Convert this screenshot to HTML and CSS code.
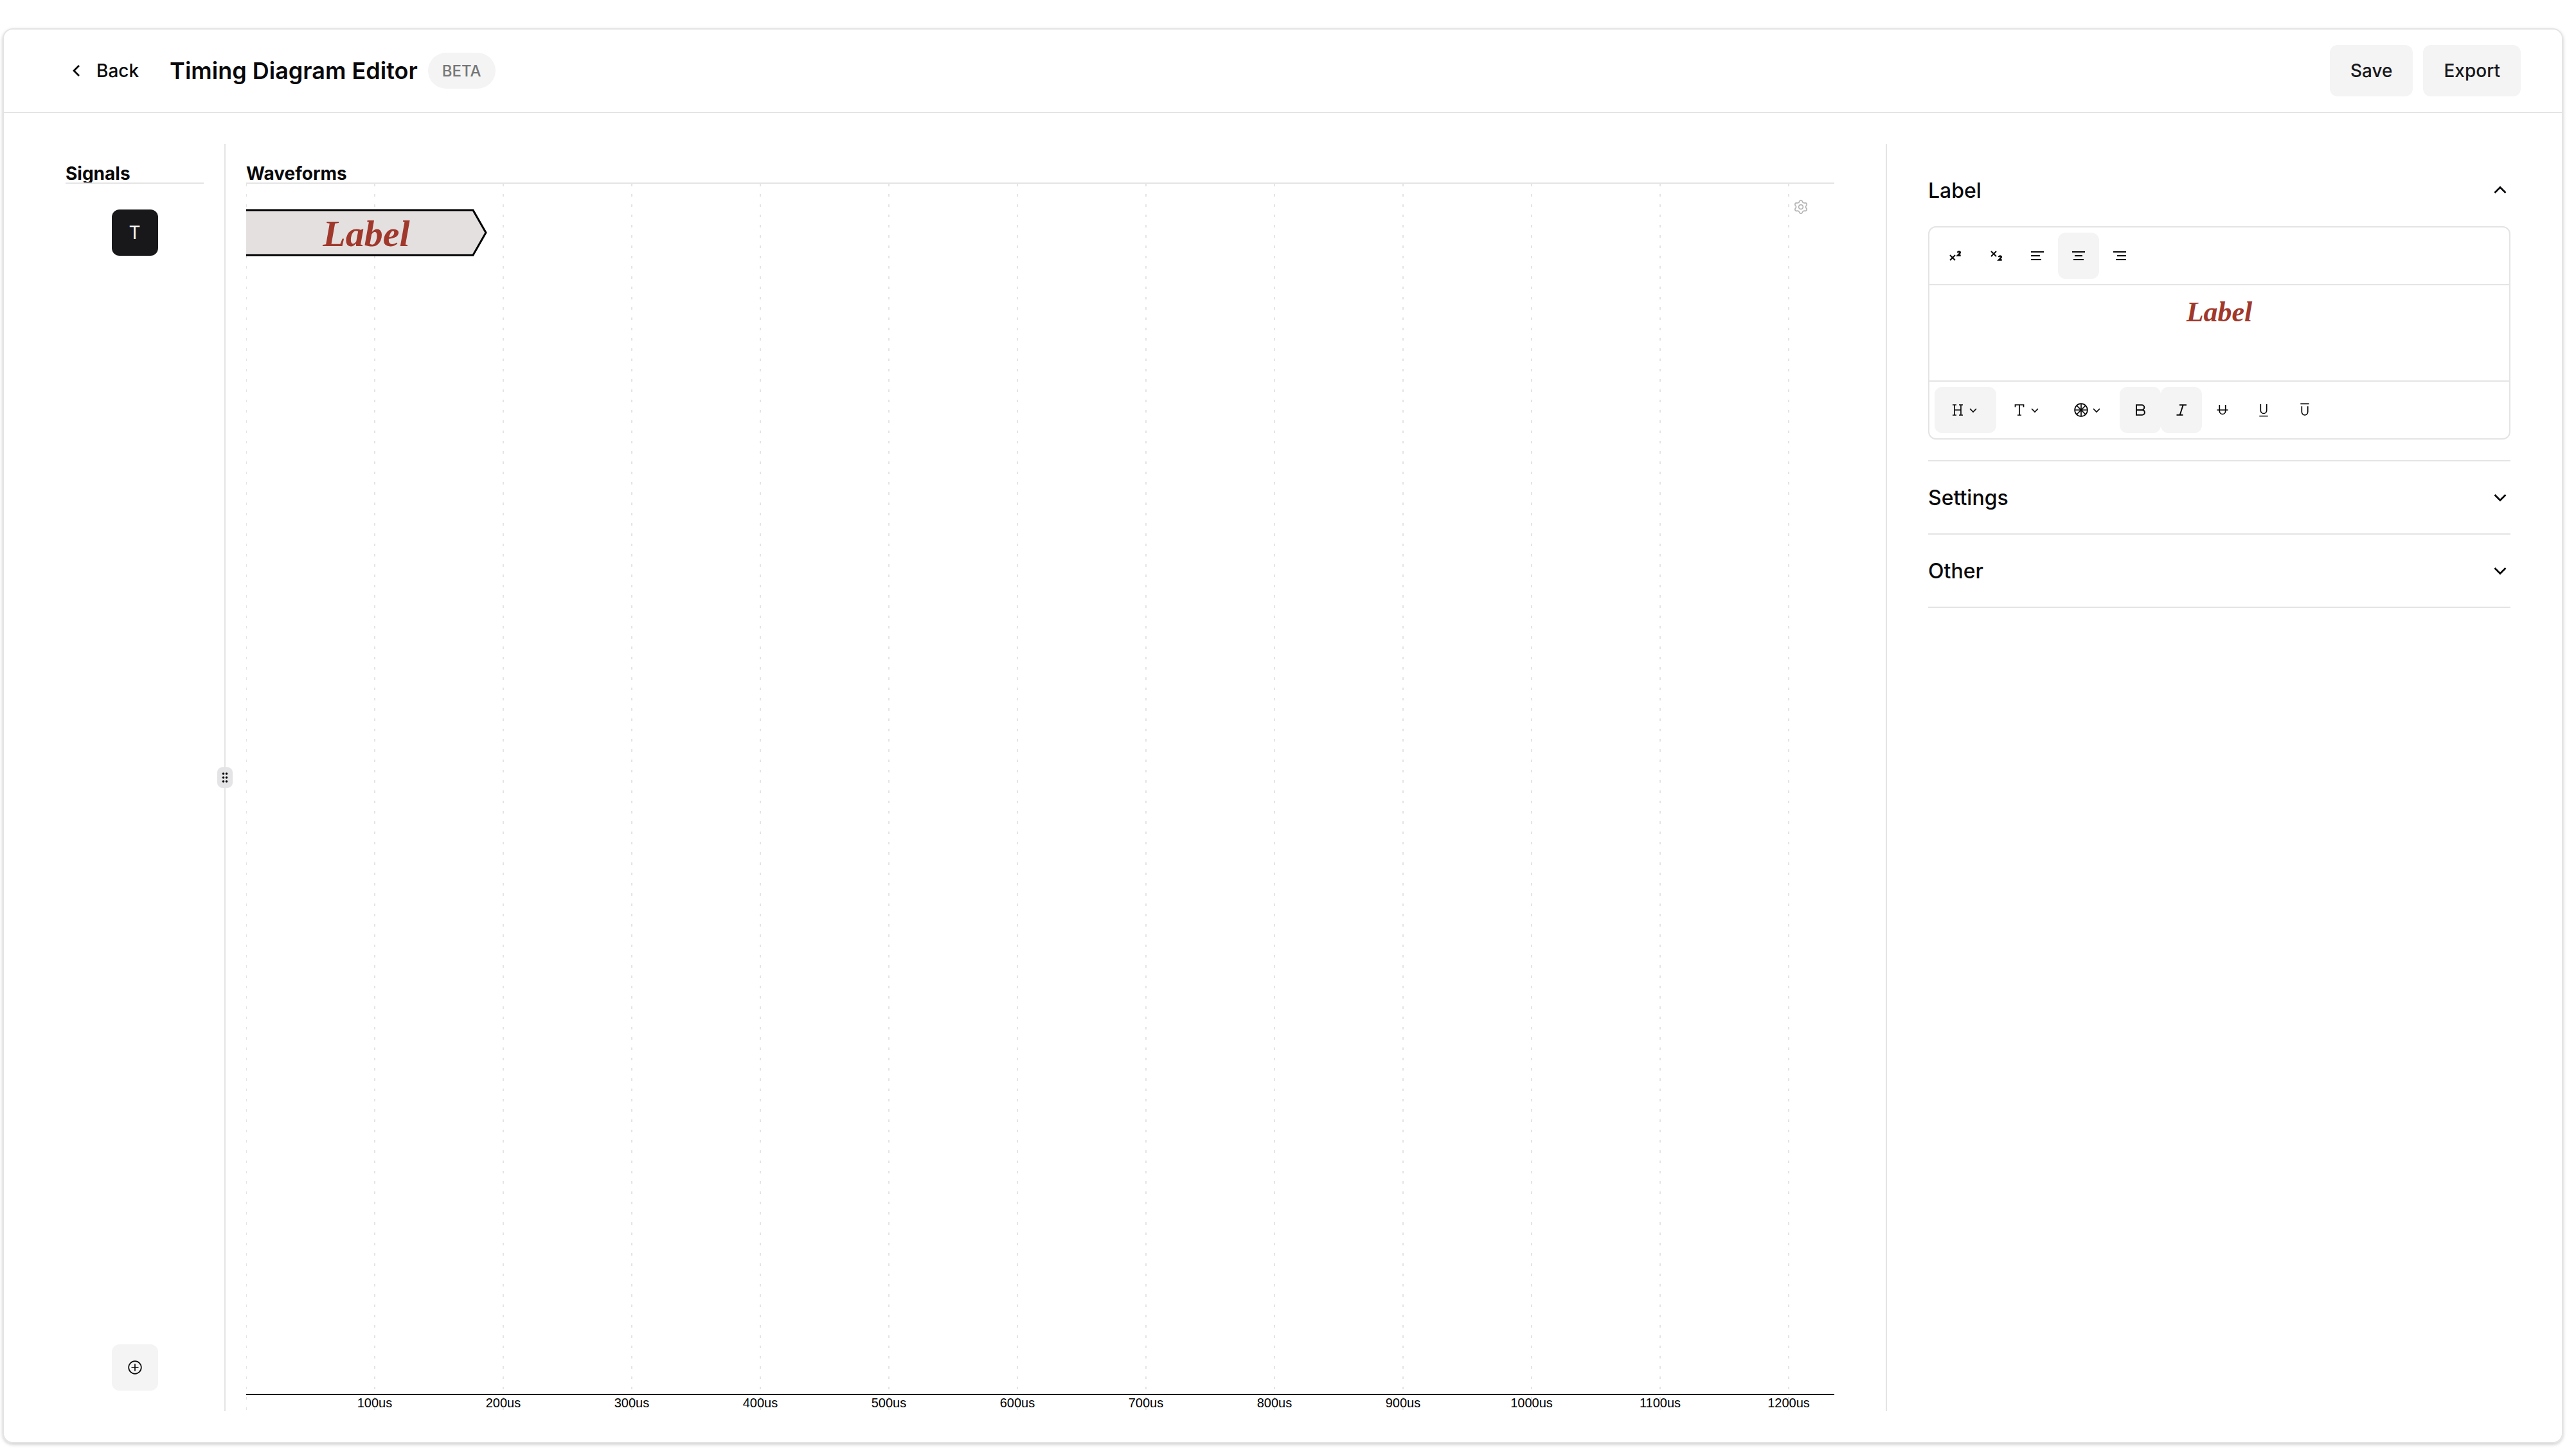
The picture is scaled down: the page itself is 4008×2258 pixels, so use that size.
FILE: index.html
```html
<!DOCTYPE html>
<html lang="en">
<head>
  <meta charset="utf-8">
  <title>Timing Diagram Editor</title>
  <link rel="stylesheet" href="styles.css">
</head>
<body>
  <main class="card">
    <header class="header">
      <button type="button" class="btn btn-back">
        <svg class="icon icon-bold" width="32" height="32" viewBox="0 0 32 32"><path d="M21 8l-8 8 8 8"/></svg>
        Back
      </button>
      <h1 class="title">Timing Diagram Editor</h1>
      <span class="badge">BETA</span>
      <div class="actions">
        <button type="button" class="btn btn-secondary">Save</button>
        <button type="button" class="btn btn-secondary">Export</button>
      </div>
    </header>

    <div class="editor">
      <section class="signals">
        <h2 class="column-title">Signals</h2>
        <div class="signal-list">
          <button type="button" class="btn-square btn-dark">T</button>
          <button type="button" class="btn-square" aria-label="Add signal">
            <svg class="icon icon-thin" width="32" height="32" viewBox="0 0 32 32"><circle cx="16" cy="16" r="9.8"/><path d="M16 10.5v11M10.5 16h11"/></svg>
          </button>
        </div>
      </section>

      <div class="divider">
        <div class="handle">
          <svg width="24" height="32" viewBox="0 0 24 32">
            <circle cx="9.5" cy="10" r="1.8"/><circle cx="14.5" cy="10" r="1.8"/>
            <circle cx="9.5" cy="16" r="1.8"/><circle cx="14.5" cy="16" r="1.8"/>
            <circle cx="9.5" cy="22" r="1.8"/><circle cx="14.5" cy="22" r="1.8"/>
          </svg>
        </div>
      </div>

      <section class="waveforms">
        <h2 class="column-title">Waveforms</h2>
        <div class="plot">
          <svg class="plot-svg">
            <!-- time grid -->
            <g class="grid">
              <line x1="0" x2="0" y2="100%"/>
              <line x1="200" x2="200" y2="100%"/>
              <line x1="400" x2="400" y2="100%"/>
              <line x1="600" x2="600" y2="100%"/>
              <line x1="800" x2="800" y2="100%"/>
              <line x1="1000" x2="1000" y2="100%"/>
              <line x1="1200" x2="1200" y2="100%"/>
              <line x1="1400" x2="1400" y2="100%"/>
              <line x1="1600" x2="1600" y2="100%"/>
              <line x1="1800" x2="1800" y2="100%"/>
              <line x1="2000" x2="2000" y2="100%"/>
              <line x1="2200" x2="2200" y2="100%"/>
              <line x1="2400" x2="2400" y2="100%"/>
            </g>
            <!-- text signal -->
            <path class="wave" d="M-4 41H353L373 76L353 111H-4Z"/>
            <text class="wave-label" x="187" y="97">Label</text>
            <!-- time axis, anchored to the bottom edge -->
            <svg class="axis" y="100%">
              <line x1="0" x2="100%" y1="-26" y2="-26"/>
              <text x="200" y="-6">100us</text>
              <text x="400" y="-6">200us</text>
              <text x="600" y="-6">300us</text>
              <text x="800" y="-6">400us</text>
              <text x="1000" y="-6">500us</text>
              <text x="1200" y="-6">600us</text>
              <text x="1400" y="-6">700us</text>
              <text x="1600" y="-6">800us</text>
              <text x="1800" y="-6">900us</text>
              <text x="2000" y="-6">1000us</text>
              <text x="2200" y="-6">1100us</text>
              <text x="2400" y="-6">1200us</text>
            </svg>
          </svg>
          <button type="button" class="gear" aria-label="Diagram settings">
            <svg class="icon icon-thin" width="24" height="24" viewBox="-12 -12 24 24">
              <path d="M-2.1-9.06Q0-11.5 2.1-9.06Q3-5.2 6.8-6.34Q9.96-5.75 8.89-2.72Q6 0 8.89 2.72Q9.96 5.75 6.8 6.34Q3 5.2 2.1 9.06Q0 11.5-2.1 9.06Q-3 5.2-6.8 6.34Q-9.96 5.75-8.89 2.72Q-6 0-8.89-2.72Q-9.96-5.75-6.8-6.34Q-3-5.2-2.1-9.06Z"/>
              <circle r="3.4"/>
            </svg>
          </button>
        </div>
      </section>

      <aside class="panel">
        <section class="accordion-item">
          <button type="button" class="accordion-trigger">
            Label
            <svg class="icon icon-bold" width="32" height="32" viewBox="0 0 32 32"><path d="M7.5 20l8.5-8.5 8.5 8.5"/></svg>
          </button>
          <div class="accordion-content">
            <div class="rich-text">
              <div class="toolbar">
                <button type="button" class="tool" aria-label="Superscript">
                  <svg class="icon" width="32" height="32" viewBox="0 0 32 32"><path d="M8 15l8 8M16 15l-8 8"/><path class="digit" d="M20 11.3q.3-1.8 2-1.8 1.7 0 1.7 1.5 0 1-3.5 4.500h4.500"/></svg>
                </button>
                <button type="button" class="tool" aria-label="Subscript">
                  <svg class="icon" width="32" height="32" viewBox="0 0 32 32"><path d="M8 9l8 8M16 9l-8 8"/><path class="digit" d="M20 18.3q.3-1.800 2-1.800 1.700 0 1.700 1.500 0 1-3.500 4.500h4.500"/></svg>
                </button>
                <button type="button" class="tool" aria-label="Align left">
                  <svg class="icon" width="32" height="32" viewBox="0 0 32 32"><path d="M6 10h20M6 16h14M6 22h16"/></svg>
                </button>
                <button type="button" class="tool active" aria-label="Align center">
                  <svg class="icon" width="32" height="32" viewBox="0 0 32 32"><path d="M6 10h20M10 16h12M8 22h16"/></svg>
                </button>
                <button type="button" class="tool" aria-label="Align right">
                  <svg class="icon" width="32" height="32" viewBox="0 0 32 32"><path d="M6 10h20M12 16h14M10 22h16"/></svg>
                </button>
              </div>
              <textarea class="rich-text-input" aria-label="Label text">Label</textarea>
              <div class="toolbar">
                <button type="button" class="tool tool-menu active" aria-label="Heading">
                  <svg class="icon icon-thin" width="24" height="24" viewBox="0 0 24 24"><path d="M7 4v16M17 4v16M7 12h10M4 4h6M14 4h6M4 20h6M14 20h6"/></svg>
                  <svg class="icon icon-thin" width="24" height="24" viewBox="0 0 24 24"><path d="M7 10l5 5 5-5"/></svg>
                </button>
                <button type="button" class="tool tool-menu" aria-label="Font">
                  <svg class="icon icon-thin" width="24" height="24" viewBox="0 0 24 24"><path d="M5.5 7.5V4h13v3.5M12 4v16M9 20h6"/></svg>
                  <svg class="icon icon-thin" width="24" height="24" viewBox="0 0 24 24"><path d="M7 10l5 5 5-5"/></svg>
                </button>
                <button type="button" class="tool tool-menu" aria-label="Color">
                  <svg class="icon icon-thin" width="24" height="24" viewBox="0 0 24 24"><circle cx="12" cy="12" r="9.9"/><path d="M12 2v20M2 12h20M5 5l14 14M19 5L5 19"/><circle cx="12" cy="12" r="1.5"/></svg>
                  <svg class="icon icon-thin" width="24" height="24" viewBox="0 0 24 24"><path d="M7 10l5 5 5-5"/></svg>
                </button>
                <button type="button" class="tool active" aria-label="Bold">
                  <svg class="icon" width="32" height="32" viewBox="0 0 32 32"><path d="M10 8.3h8.5a3.8 3.8 0 0 1 0 7.6H10zM10 15.9h9a3.9 3.9 0 0 1 0 7.8h-9z"/></svg>
                </button>
                <button type="button" class="tool active" aria-label="Italic">
                  <svg class="icon" width="32" height="32" viewBox="0 0 32 32"><path d="M13 8.3h11M8.5 23.7h10M18.7 8.3l-5 15.4"/></svg>
                </button>
                <button type="button" class="tool" aria-label="Strikethrough">
                  <svg class="icon icon-thin" width="32" height="32" viewBox="0 0 32 32"><path d="M11.3 8v9.5a4.7 5 0 0 0 9.4 0V8M7.5 16h17"/></svg>
                </button>
                <button type="button" class="tool" aria-label="Underline">
                  <svg class="icon icon-thin" width="32" height="32" viewBox="0 0 32 32"><path d="M11.3 7v9.5a4.7 5 0 0 0 9.4 0V7M9.3 25.5h13.4"/></svg>
                </button>
                <button type="button" class="tool" aria-label="Overline">
                  <svg class="icon icon-thin" width="32" height="32" viewBox="0 0 32 32"><path d="M11.3 10.3v8.5a4.7 5 0 0 0 9.4 0v-8.5M9.3 6.4h13.4"/></svg>
                </button>
              </div>
            </div>
          </div>
        </section>
        <section class="accordion-item">
          <button type="button" class="accordion-trigger">
            Settings
            <svg class="icon icon-bold" width="32" height="32" viewBox="0 0 32 32"><path d="M7.5 12l8.5 8.5 8.5-8.5"/></svg>
          </button>
        </section>
        <section class="accordion-item">
          <button type="button" class="accordion-trigger">
            Other
            <svg class="icon icon-bold" width="32" height="32" viewBox="0 0 32 32"><path d="M7.5 12l8.5 8.5 8.5-8.5"/></svg>
          </button>
        </section>
      </aside>
    </div>
  </main>
</body>
</html>
```

FILE: styles.css
```css
* {
  box-sizing: border-box;
}

body {
  margin: 0;
  height: 100vh;
  padding: 44px 20px 12px 4px;
  font-family: Inter, "Liberation Sans", sans-serif;
  font-size: 28px;
  color: #09090b;
  background: #fff;
}

button {
  border: 0;
  background: none;
  font: inherit;
  color: inherit;
  cursor: pointer;
}

h1,
h2 {
  margin: 0;
}

.card {
  display: flex;
  flex-direction: column;
  height: 100%;
  border: 2px solid #e4e4e4;
  border-radius: 16px;
  box-shadow: 0 2px 6px rgba(0, 0, 0, 0.1), 0 2px 4px rgba(0, 0, 0, 0.1);
}

.icon {
  flex: none;
  fill: none;
  stroke: currentColor;
  stroke-width: 2;
}

.icon-thin {
  stroke-width: 1.7;
}

.icon-bold {
  stroke-width: 2.8;
}

.digit {
  stroke-width: 2.6;
}

/* Header */

.header {
  display: flex;
  align-items: center;
  gap: 16px;
  height: 130px;
  padding: 0 64px;
  border-bottom: 2px solid #e4e4e4;
}

.btn {
  display: flex;
  align-items: center;
  gap: 16px;
  height: 80px;
  padding: 0 32px;
  border-radius: 12px;
  font-weight: 500;
}

.btn-secondary {
  background: #f4f4f4;
  color: #18181b;
}

.title {
  font-size: 36px;
  font-weight: 600;
}

.badge {
  display: flex;
  align-items: center;
  height: 56px;
  padding: 0 22px;
  border-radius: 28px;
  background: #f4f4f4;
  color: #777;
  font-size: 24px;
  font-weight: 500;
}

.actions {
  display: flex;
  gap: 16px;
  margin-left: auto;
}

/* Editor columns */

.editor {
  display: flex;
  flex: 1;
  min-height: 0;
  padding: 48px 80px 48px 96px;
}

.column-title {
  display: flex;
  flex: none;
  align-items: flex-end;
  height: 62px;
  border-bottom: 2px solid #e4e4e4;
  font-size: 28px;
  line-height: 28px;
  font-weight: 700;
  overflow: hidden;
}

.signals {
  display: flex;
  flex-direction: column;
  width: 215px;
}

.signal-list {
  display: flex;
  flex: 1;
  flex-direction: column;
  align-items: center;
  justify-content: space-between;
  padding: 40px 0 32px;
}

.btn-square {
  display: flex;
  align-items: center;
  justify-content: center;
  width: 72px;
  height: 72px;
  padding: 0;
  border-radius: 12px;
  background: #f4f4f4;
}

.btn-dark {
  background: #18181b;
  color: #fafafa;
}

.divider {
  display: flex;
  align-items: center;
  justify-content: center;
  width: 2px;
  margin: 0 32px;
  background: #e4e4e4;
}

.handle {
  display: flex;
  flex: none;
  border-radius: 8px;
  background: #e4e4e7;
}

/* Waveforms */

.waveforms {
  display: flex;
  flex: 1;
  flex-direction: column;
  min-width: 0;
}

.plot {
  position: relative;
  flex: 1;
  min-height: 0;
}

.plot-svg {
  display: block;
  width: 100%;
  height: 100%;
}

.grid line {
  stroke: #e4e4e4;
  stroke-width: 2;
  stroke-dasharray: 4 12;
}

.wave {
  fill: #e4e0df;
  stroke: #000;
  stroke-width: 3;
}

.wave-label {
  fill: #a0382c;
  font: italic bold 58px "Liberation Serif", serif;
  text-anchor: middle;
}

.axis {
  overflow: visible;
}

.axis line {
  stroke: #000;
  stroke-width: 2;
}

.axis text {
  font: 20px "Liberation Sans", sans-serif;
  text-anchor: middle;
}

.gear {
  position: absolute;
  top: 24px;
  right: 40px;
  display: flex;
  padding: 0;
  color: #b4b4b4;
}

/* Properties panel */

.panel {
  width: 972px;
  margin-left: 80px;
  padding: 16px 0 0 64px;
  border-left: 2px solid #e4e4e4;
}

.accordion-item {
  border-bottom: 2px solid #e4e4e4;
}

.accordion-trigger {
  display: flex;
  align-items: center;
  justify-content: space-between;
  width: 100%;
  height: 112px;
  padding: 0;
  font-size: 32px;
  font-weight: 500;
}

.accordion-content {
  padding-bottom: 32px;
}

.rich-text {
  border: 2px solid #e4e4e4;
  border-radius: 12px;
}

.toolbar {
  display: flex;
  padding: 8px;
}

.tool {
  display: flex;
  align-items: center;
  justify-content: center;
  width: 64px;
  height: 72px;
  padding: 0;
  border-radius: 12px;
}

.tool-menu {
  width: 96px;
}

.active {
  background: #f4f4f4;
}

.rich-text-input {
  display: block;
  width: 100%;
  height: 152px;
  padding: 16px;
  border: solid #e4e4e4;
  border-width: 2px 0;
  outline: 0;
  resize: none;
  background: none;
  color: #a0382c;
  font: italic bold 44px/52px "Liberation Serif", serif;
  text-align: center;
}
```
